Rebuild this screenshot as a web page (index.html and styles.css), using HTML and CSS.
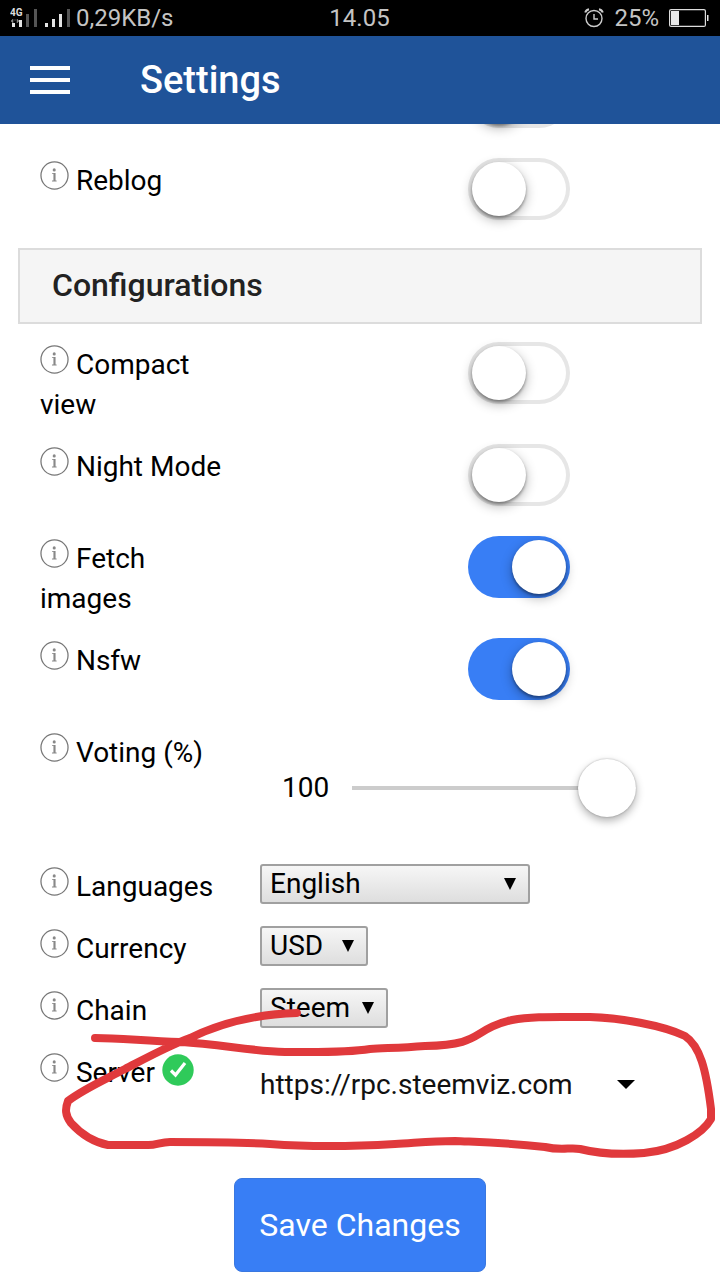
FILE: index.html
```html
<!DOCTYPE html>
<html lang="en">
<head>
<meta charset="utf-8">
<meta name="viewport" content="width=device-width, initial-scale=1">
<title>Settings</title>
<link rel="stylesheet" href="styles.css">
</head>
<body>
<svg class="defs" width="0" height="0" aria-hidden="true">
  <symbol id="info" viewBox="0 0 30 30">
    <circle cx="15" cy="15" r="14" fill="none" stroke="#777" stroke-width="1.3"/>
    <circle cx="14.7" cy="9.2" r="1.6" fill="#888"/>
    <path d="M12.4 12.3h3.7v8h1.1v1h-4.800v-1h1.500v-7h-1.500z" fill="#888"/>
  </symbol>
</svg>

<div class="status">
  <div class="status-side">
    <svg width="64" height="20" viewBox="0 0 64 20" aria-hidden="true">
      <text x="0" y="8" class="net">4G</text>
      <path d="M1 13l2-2v4zM4 12h2M9 13l-2-2v4z" fill="#888" stroke="#888" stroke-width=".5"/>
      <path d="M2 15h3v4H2zM9 12h3v7H9zM35 15h3v4h-3zM42 11h3v8h-3zM49 6h3v13h-3z" fill="#e4e4e4"/>
      <path d="M16 6h3v13h-3zM24 1h3v18h-3zM57 1h3v18h-3z" fill="#555"/>
    </svg>
    <span>0,29KB/s</span>
  </div>
  <span>14.05</span>
  <div class="status-side status-end">
    <svg width="20" height="20" viewBox="0 0 20 20" fill="none" stroke="#ccc" stroke-width="1.4" aria-hidden="true">
      <circle cx="10" cy="10.5" r="8"/><path d="M10 6v5h4"/><path d="M1.200 4.500A5 5 0 0 1 5 1.200M18.800 4.500A5 5 0 0 0 15 1.200" stroke-width="2"/>
    </svg>
    <span class="percent">25%</span>
    <svg width="40" height="18" viewBox="0 0 40 18" aria-hidden="true">
      <rect x=".6" y=".6" width="35.800" height="16.800" rx="1.500" fill="none" stroke="#ddd" stroke-width="1.2"/>
      <path d="M2 2h8v14H2zM38 6h1.500v6H38z" fill="#e8e8e8"/>
    </svg>
  </div>
</div>

<header class="bar">
  <button class="menu" type="button" aria-label="Menu"><span></span><span></span><span></span></button>
  <h1>Settings</h1>
</header>

<main>
  <div class="row switch-row">
    <span></span>
    <input class="switch" type="checkbox" aria-label="Notification">
  </div>
  <div class="row switch-row">
    <label for="reblog"><svg class="info" aria-hidden="true"><use href="#info"/></svg> Reblog</label>
    <input class="switch" type="checkbox" id="reblog">
  </div>

  <h2>Configurations</h2>

  <div class="row switch-row">
    <label for="compact"><svg class="info" aria-hidden="true"><use href="#info"/></svg> Compact view</label>
    <input class="switch" type="checkbox" id="compact">
  </div>
  <div class="row switch-row">
    <label for="night"><svg class="info" aria-hidden="true"><use href="#info"/></svg> Night Mode</label>
    <input class="switch" type="checkbox" id="night">
  </div>
  <div class="row switch-row">
    <label for="fetch"><svg class="info" aria-hidden="true"><use href="#info"/></svg> Fetch images</label>
    <input class="switch" type="checkbox" id="fetch" checked>
  </div>
  <div class="row switch-row">
    <label for="nsfw"><svg class="info" aria-hidden="true"><use href="#info"/></svg> Nsfw</label>
    <input class="switch" type="checkbox" id="nsfw" checked>
  </div>
  <div class="row">
    <label for="voting"><svg class="info" aria-hidden="true"><use href="#info"/></svg> Voting (%)</label>
    <div class="slider">
      <output for="voting">100</output>
      <input type="range" id="voting" min="0" max="100" value="100">
    </div>
  </div>
  <div class="row">
    <label for="language"><svg class="info" aria-hidden="true"><use href="#info"/></svg> Languages</label>
    <div class="pick pick-wide">
      <select id="language"><option>English</option></select>
      <svg class="arrow" width="12" height="12" viewBox="0 0 12 12" aria-hidden="true"><path d="M0 0h12L6 12z"/></svg>
    </div>
  </div>
  <div class="row">
    <label for="currency"><svg class="info" aria-hidden="true"><use href="#info"/></svg> Currency</label>
    <div class="pick pick-small">
      <select id="currency"><option>USD</option></select>
      <svg class="arrow" width="12" height="12" viewBox="0 0 12 12" aria-hidden="true"><path d="M0 0h12L6 12z"/></svg>
    </div>
  </div>
  <div class="row">
    <label for="chain"><svg class="info" aria-hidden="true"><use href="#info"/></svg> Chain</label>
    <div class="pick pick-medium">
      <select id="chain"><option>Steem</option></select>
      <svg class="arrow" width="12" height="12" viewBox="0 0 12 12" aria-hidden="true"><path d="M0 0h12L6 12z"/></svg>
    </div>
  </div>
  <div class="row">
    <label for="server"><svg class="info" aria-hidden="true"><use href="#info"/></svg> Server
      <svg class="ok" viewBox="0 0 32 32" aria-hidden="true"><circle cx="16" cy="16" r="15.700" fill="#2fca5a"/><path d="M9 16.500l4.500 4.500L23 9" fill="none" stroke="#fff" stroke-width="3.200"/></svg></label>
    <div class="pick pick-plain">
      <select id="server"><option>https://rpc.steemviz.com</option></select>
      <svg class="arrow" width="18" height="9" viewBox="0 0 18 9" aria-hidden="true"><path d="M0 0h18L9 9z"/></svg>
    </div>
  </div>

  <button class="save" type="button">Save Changes</button>
</main>

<svg class="ink" viewBox="0 0 720 180" aria-hidden="true">
  <path d="M95 38C120 38 145 41 180 42C220 44 250 51 285 52C315 52 345 53 370 49C385 48 400 48 425 46C485 45 470 30 512 20C532 16 555 17 590 17C620 18 662 25 685 36C700 46 706 69 711 109V119C703 133 677 150 644 153C618 155 596 153 580 149C570 147 562 151 545 147C500 142 475 142 455 141C430 141 415 143 395 144C345 147 310 147 270 144C235 142 205 142 170 142C160 142 155 146 146 145H108C93 142 80 133 71 123C65 115 65 109 68 101C82 90 100 82 125 69C150 56 170 45 190 38C225 21 260 14 297 13"/>
</svg>
</body>
</html>
```

FILE: styles.css
```css
* { box-sizing: border-box; }

body {
  margin: 0;
  position: relative;
  background: #fff;
  color: #000;
  font: 28px/40px Roboto, sans-serif;
}

button, select, input { font: inherit; color: inherit; margin: 0; }

.defs { display: none; }

.status {
  position: relative;
  z-index: 1;
  display: flex;
  align-items: center;
  height: 36px;
  padding: 0 11px 0 10px;
  background: #000;
  color: #c4c4c4;
  font-size: 24px;
  line-height: 36px;
}
.status-side { display: flex; flex: 1; align-items: center; gap: 2px; }
.status-end { justify-content: flex-end; }
.percent { margin: 0 8px; }
.net { font: bold 10px Roboto, sans-serif; fill: #ddd; }

.bar {
  position: relative;
  z-index: 1;
  display: flex;
  align-items: center;
  gap: 70px;
  height: 88px;
  padding: 0 30px;
  background: #1f5399;
  color: #fff;
}
.menu {
  display: flex;
  flex-direction: column;
  gap: 8px;
  width: 40px;
  padding: 0;
  border: 0;
  background: none;
}
.menu span { height: 4px; background: #fff; }
h1 { margin: 0; font-size: 38px; line-height: 48px; font-weight: 500; }

main { margin-top: -68px; padding: 0 18px 8px; }

.row {
  display: grid;
  grid-template-columns: 192px minmax(0, 1fr);
  column-gap: 28px;
  align-items: start;
  padding: 10px 22px 9px;
}
.switch-row {
  grid-template-columns: 192px 102px;
  justify-content: space-between;
  min-height: 92px;
  padding-right: 132px;
}
label { padding-top: 3px; }
.info { width: 29px; height: 29px; vertical-align: 0; }
.ok { width: 32px; height: 32px; vertical-align: -4px; }

.switch {
  appearance: none;
  width: 102px;
  height: 62px;
  padding: 4px;
  border-radius: 31px;
  background: #fff;
  box-shadow: inset 0 0 0 4px #e6e6e6;
}
.switch::before {
  content: "";
  display: block;
  width: 54px;
  height: 54px;
  border-radius: 50%;
  background: #fff;
  box-shadow: 0 4px 12px rgba(0, 0, 0, .3), 0 2px 3px rgba(0, 0, 0, .35);
}
.switch:checked { background: #387ef5; box-shadow: none; }
.switch:checked::before { margin-left: 40px; }

h2 {
  margin: 8px 0;
  padding: 16px 32px 18px;
  border: 2px solid #dcdcdc;
  background: #f5f5f5;
  color: #222;
  font-size: 32px;
  line-height: 38px;
  font-weight: 500;
}

.slider {
  display: flex;
  align-items: center;
  gap: 23px;
  height: 115px;
  padding: 0 44px 0 22px;
}
.slider input {
  appearance: none;
  flex: 1;
  min-width: 0;
  height: 58px;
  background: linear-gradient(#ccc, #ccc) center / 100% 4px no-repeat;
}
.slider input::-webkit-slider-thumb {
  appearance: none;
  width: 58px;
  height: 58px;
  border-radius: 50%;
  background: #fff;
  box-shadow: 0 0 2px rgba(0, 0, 0, .3), 0 4px 8px rgba(0, 0, 0, .3);
}

.pick { position: relative; height: 40px; }
.pick select {
  appearance: none;
  width: 100%;
  height: 100%;
  padding: 0 8px;
  border: 2px solid #a0a0a0;
  border-radius: 3px;
  background: linear-gradient(#f6f6f6, #dedede);
  line-height: 36px;
}
.pick-wide { width: 270px; }
.pick-medium { width: 128px; }
.pick-small { width: 108px; }
.arrow { position: absolute; top: 14px; right: 14px; pointer-events: none; }
.pick-plain { height: 70px; }
.pick-plain select { padding: 0; border: 0; background: none; color: #111; }
.pick-plain .arrow { top: 30px; right: 45px; }

.save {
  display: block;
  margin: 49px auto 0;
  padding: 25px 24px;
  border: 1px solid #3a78e0;
  border-radius: 8px;
  background: #387ef5;
  color: #fff;
  font-size: 32px;
  line-height: 42px;
}

.ink { position: absolute; left: 0; top: 1000px; width: 100%; pointer-events: none; }
.ink path { fill: none; stroke: #e0393c; stroke-width: 8; stroke-linecap: round; stroke-linejoin: round; }
```
